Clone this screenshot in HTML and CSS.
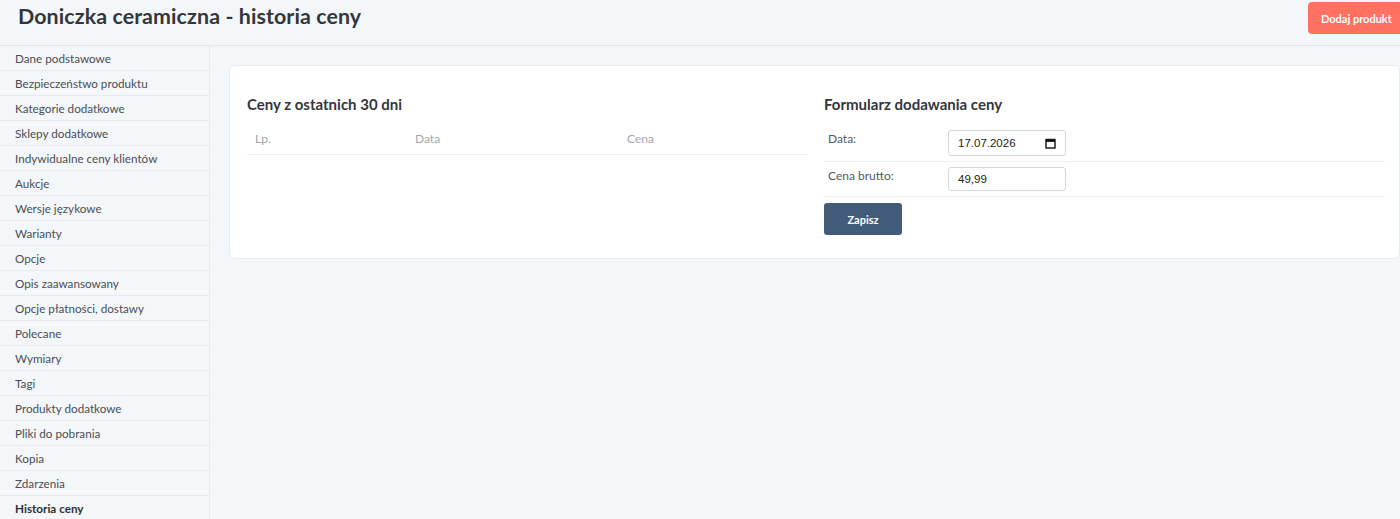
FILE: index.html
```html
<!DOCTYPE html>
<html lang="pl">
<head>
<meta charset="utf-8">
<title>Doniczka ceramiczna - historia ceny</title>
<link rel="stylesheet" href="styles.css">
</head>
<body>
<div class="page">
  <header class="topbar">
    <h1 class="page-title">Doniczka ceramiczna - historia ceny</h1>
    <button class="btn-add" type="button">Dodaj produkt</button>
  </header>
  <div class="layout">
    <nav class="sidenav">
      <a class="nav-item">Dane podstawowe</a>
      <a class="nav-item">Bezpieczeństwo produktu</a>
      <a class="nav-item">Kategorie dodatkowe</a>
      <a class="nav-item">Sklepy dodatkowe</a>
      <a class="nav-item">Indywidualne ceny klientów</a>
      <a class="nav-item">Aukcje</a>
      <a class="nav-item">Wersje językowe</a>
      <a class="nav-item">Warianty</a>
      <a class="nav-item">Opcje</a>
      <a class="nav-item">Opis zaawansowany</a>
      <a class="nav-item">Opcje płatności, dostawy</a>
      <a class="nav-item">Polecane</a>
      <a class="nav-item">Wymiary</a>
      <a class="nav-item">Tagi</a>
      <a class="nav-item">Produkty dodatkowe</a>
      <a class="nav-item">Pliki do pobrania</a>
      <a class="nav-item">Kopia</a>
      <a class="nav-item">Zdarzenia</a>
      <a class="nav-item is-active">Historia ceny</a>
    </nav>
    <main class="content">
      <section class="card">
        <div class="card-col">
          <h2 class="section-title">Ceny z ostatnich 30 dni</h2>
          <table class="price-table">
            <thead>
              <tr>
                <th class="col-lp">Lp.</th>
                <th class="col-date">Data</th>
                <th class="col-price">Cena</th>
              </tr>
            </thead>
            <tbody></tbody>
          </table>
        </div>
        <div class="card-col">
          <h2 class="section-title">Formularz dodawania ceny</h2>
          <form class="price-form">
            <div class="form-row">
              <label class="form-label">Data:</label>
              <div class="fake-input date-input">
                <span>17.07.2026</span>
                <svg class="cal-icon" width="11" height="11" viewBox="0 0 11 11">
                  <rect x="1" y="1.5" width="9" height="8.5" fill="none" stroke="#111" stroke-width="1.4"/>
                  <rect x="1" y="1.5" width="9" height="2.4" fill="#111"/>
                </svg>
              </div>
            </div>
            <div class="form-row">
              <label class="form-label">Cena brutto:</label>
              <div class="fake-input"><span>49,99</span></div>
            </div>
            <button class="btn-save" type="button">Zapisz</button>
          </form>
        </div>
      </section>
    </main>
  </div>
</div>
</body>
</html>
```

FILE: styles.css
```css
html, body {
  margin: 0;
  padding: 0;
  background: #f4f7fa;
  overflow: hidden;
}

body {
  font-family: "Lato", "Noto Sans", sans-serif;
  color: #33475b;
}

.page {
  width: 1420px;
  height: 519px;
}

.topbar {
  height: 46px;
  box-sizing: border-box;
  border-bottom: 1px solid #e4e9ee;
  display: flex;
  align-items: flex-start;
  justify-content: space-between;
  padding-left: 18px;
}

.page-title {
  margin: 3px 0 0;
  font-size: 21.4px;
  font-weight: 700;
  color: #33363b;
  letter-spacing: 0.1px;
}

.btn-add {
  margin-top: 2px;
  width: 112px;
  height: 32px;
  border: 0;
  border-radius: 4px;
  background: #ff7262;
  color: #fff;
  font-family: inherit;
  font-weight: 700;
  font-size: 11px;
  text-align: left;
  padding-left: 13px;
}

.layout {
  display: flex;
  align-items: flex-start;
}

.sidenav {
  width: 209px;
  flex: none;
  border-right: 1px solid #e6ebf0;
  display: flex;
  flex-direction: column;
}

.nav-item {
  height: 25px;
  box-sizing: border-box;
  border-bottom: 1px solid #e6ebf0;
  padding-left: 15px;
  font-size: 11.7px;
  line-height: 25px;
  color: #4a4e54;
}

.nav-item.is-active {
  font-weight: 700;
  color: #2c3036;
}

.content {
  flex: none;
  width: 1191px;
  padding: 19px 0 0 19px;
}

.card {
  width: 1171px;
  height: 194px;
  box-sizing: border-box;
  background: #fff;
  border: 1px solid #e6ebf0;
  border-radius: 6px;
  display: grid;
  grid-template-columns: 561px 561px;
  column-gap: 16px;
  padding: 29px 0 0 17px;
}

.section-title {
  margin: 0 0 15px;
  font-size: 15px;
  font-weight: 700;
  color: #33363b;
  line-height: 18px;
}

.price-table {
  width: 100%;
  border-collapse: collapse;
}

.price-table th {
  text-align: left;
  font-weight: 400;
  font-size: 12px;
  color: #a3a7ad;
  padding: 3px 8px 8px;
  border-bottom: 1px solid #e9edf1;
}

.col-lp { width: 144px; }
.col-date { width: 196px; }

.price-form {
  display: flex;
  flex-direction: column;
  padding-top: 2px;
}

.form-row {
  display: flex;
  align-items: flex-start;
  border-bottom: 1px solid #eef1f4;
  padding: 0 0 5px 4px;
}

.form-row + .form-row {
  padding-top: 5px;
}

.form-label {
  width: 120px;
  font-size: 12px;
  color: #55595f;
  line-height: 16px;
  margin-top: 1px;
}

.fake-input {
  width: 118px;
  height: 24px;
  box-sizing: border-box;
  border: 1px solid #d4d8dd;
  border-radius: 3px;
  padding: 0 9px;
  display: flex;
  align-items: center;
  justify-content: space-between;
  font-family: "Liberation Sans", Arial, sans-serif;
  font-size: 11.5px;
  color: #222;
}

.date-input {
  height: 26px;
}

.cal-icon {
  display: block;
}

.btn-save {
  margin-top: 6px;
  width: 78px;
  height: 32px;
  border: 0;
  border-radius: 3px;
  background: #425b78;
  color: #fff;
  font-family: inherit;
  font-weight: 700;
  font-size: 11px;
}
```
